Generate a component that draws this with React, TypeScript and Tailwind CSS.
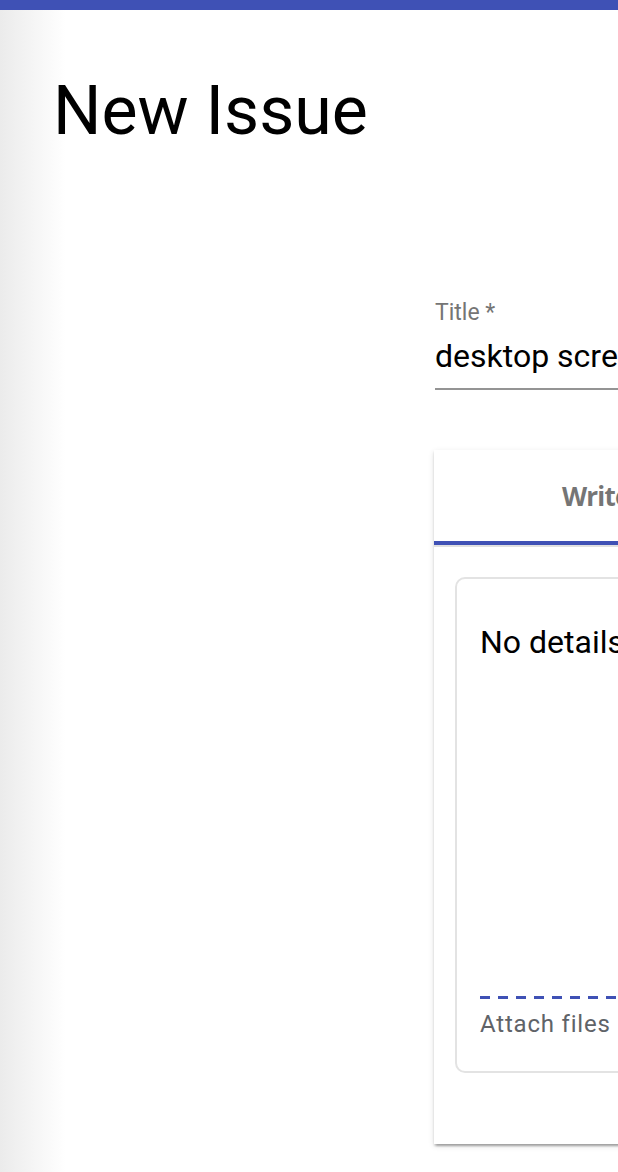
import React from "react";

const roboto = { fontFamily: "Roboto, 'Liberation Sans', sans-serif" };
const tabFont = { fontFamily: "'Open Sans', 'DejaVu Sans', sans-serif" };

export default function App() {
  return (
    <div
      className="min-h-[1172px] w-full overflow-hidden bg-[linear-gradient(to_right,#ebebeb,#ffffff_66px)] text-black"
      style={roboto}
    >
      <div className="h-[10px] w-full bg-[#3f51b5]" />

      <h1 className="ml-[53px] mt-[59px] text-[68px] font-normal leading-[84px]">New Issue</h1>

      <div className="ml-[435px] mt-[148px] w-[600px]">
        <label className="block text-[23px] leading-none text-[#757575]">Title *</label>
        <div className="mt-[16px] whitespace-nowrap text-[32px] leading-none">desktop screenshot</div>
        <div className="mt-[16px] h-[2px] w-full bg-[#949494]" />
      </div>

      <IssueBodyCard />
    </div>
  );
}

function IssueBodyCard() {
  return (
    <div className="ml-[434px] mt-[60px] w-[760px] bg-white pb-[71px] shadow-[0_4px_2px_-2px_rgba(0,0,0,0.2),0_2px_2px_0_rgba(0,0,0,0.14),0_2px_6px_0_rgba(0,0,0,0.12)]">
      <div className="flex border-b-2 border-[#e0e0e0]">
        <div className="flex w-[332px] flex-col">
          <div
            className="pb-[31px] pl-[128px] pt-[32px] text-left text-[26px] font-bold leading-[28px] tracking-[-0.8px] text-[#757575]"
            style={tabFont}
          >
            Write
          </div>
          <div className="h-[4px] w-full bg-[#3f51b5]" />
        </div>
        <div className="flex w-[332px] flex-col">
          <div
            className="pb-[31px] pt-[32px] text-center text-[26px] font-bold leading-[28px] tracking-[-0.8px] text-[#757575]"
            style={tabFont}
          >
            Preview
          </div>
          <div className="h-[4px] w-full" />
        </div>
      </div>

      <div className="mx-[21px] mt-[30px] rounded-[10px] border-2 border-[#e3e3e3] pb-[35px] pl-[23px] pt-[47px]">
        <p className="text-[32px] leading-none">No details</p>
        <div className="mt-[338px] h-[3px] w-full bg-[repeating-linear-gradient(to_right,#3f51b5_0,#3f51b5_10px,transparent_10px,transparent_18px)]" />
        <p className="mt-[13px] whitespace-nowrap text-[24px] leading-none tracking-[0.8px] text-[#5f6368]">
          Attach files by dragging &amp; dropping, selecting or pasting them.
        </p>
      </div>
    </div>
  );
}
